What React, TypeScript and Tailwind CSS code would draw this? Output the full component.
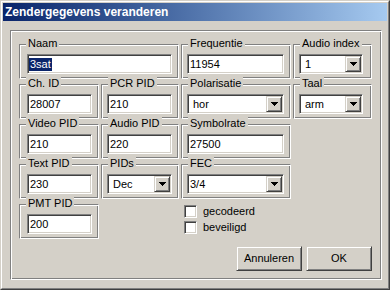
const etched =
  "border border-t-[#808080] border-l-[#808080] border-r-white border-b-white shadow-[inset_1px_1px_0_#fff,inset_-1px_-1px_0_#808080]"
const sunken =
  "border border-t-[#808080] border-l-[#808080] border-r-white border-b-white shadow-[inset_1px_1px_0_#404040,inset_-1px_-1px_0_#d4d0c8]"
const raised =
  "border border-t-[#d4d0c8] border-l-[#d4d0c8] border-r-[#404040] border-b-[#404040] shadow-[inset_1px_1px_0_#fff,inset_-1px_-1px_0_#808080]"

function Group({ label, first, className = "", children }: { label: string; first?: boolean; className?: string; children?: React.ReactNode }) {
  return (
    <div className={`relative h-[35px] pt-[9px] ${first ? "pl-[7px]" : "pl-[5px]"} ${etched} ${className}`}>
      <span className="absolute left-[6px] top-[-8px] bg-[#d4d0c8] px-[2px] leading-[13px]">{label}</span>
      {children}
    </div>
  )
}

function Edit({ value, w, selected }: { value: string; w: string; selected?: boolean }) {
  return (
    <div className={`flex h-[20px] items-center bg-white pl-[2px] leading-[13px] ${sunken} ${w}`}>
      {selected ? <span className="-ml-[1px] bg-[#0a246a] px-[1px] text-white">{value}</span> : value}
    </div>
  )
}

function Combo({ value, w, pad = "pl-[4px]" }: { value: string; w: string; pad?: string }) {
  return (
    <div className={`flex h-[20px] items-center bg-white p-[1px] leading-[13px] ${sunken} ${w}`}>
      <span className={`flex-1 ${pad}`}>{value}</span>
      <div className={`flex h-[16px] w-[16px] items-center justify-center bg-[#d4d0c8] ${raised}`}>
        <svg width="7" height="4" viewBox="0 0 7 4" shapeRendering="crispEdges">
          <path d="M0 0h7v1H0zM1 1h5v1H1zM2 2h3v1H2zM3 3h1v1H3z" fill="#000" />
        </svg>
      </div>
    </div>
  )
}

function Check({ label }: { label: string }) {
  return (
    <div className="flex items-center gap-[6px] leading-[13px]">
      <div className={`h-[13px] w-[13px] bg-white ${sunken}`} />
      <span>{label}</span>
    </div>
  )
}

function Button({ label }: { label: string }) {
  return (
    <div className={`flex h-[25px] w-[66px] items-center justify-center bg-[#d4d0c8] ${raised}`}>{label}</div>
  )
}

export default function App() {
  return (
    <div className="h-[290px] w-[390px] border border-t-[#d4d0c8] border-l-[#d4d0c8] border-r-[#404040] border-b-[#404040] bg-[#d4d0c8] font-['Liberation_Sans',Arial,sans-serif] text-[11px] text-black">
      <div className="h-full border border-t-white border-l-white border-r-[#808080] border-b-[#808080] p-[1px]">
        {/* titelbalk */}
        <div className="h-[18px] bg-gradient-to-r from-[#0a246a] to-[#a6caf0] pl-[2px] text-[12px] font-bold leading-[18px] text-white">
          Zendergegevens veranderen
        </div>

        <div className={`ml-[7px] mt-[9px] h-[250px] w-[372px] pl-[8px] pt-[13px] ${etched}`}>
          <div className="grid grid-cols-[80px_78px_110px_79px] grid-rows-[35px_35px_35px_35px_35px] gap-x-[2px] gap-y-[5px]">
            <Group label="Naam" first className="col-span-2">
              <Edit value="3sat" w="w-[145px]" selected />
            </Group>
            <Group label="Frequentie">
              <Edit value="11954" w="w-[97px]" />
            </Group>
            <Group label="Audio index">
              <Combo value="1" w="w-[64px]" />
            </Group>

            <Group label="Ch. ID" first>
              <Edit value="28007" w="w-[65px]" />
            </Group>
            <Group label="PCR PID">
              <Edit value="210" w="w-[65px]" />
            </Group>
            <Group label="Polarisatie">
              <Combo value="hor" w="w-[97px]" />
            </Group>
            <Group label="Taal">
              <Combo value="arm" w="w-[64px]" />
            </Group>

            <Group label="Video PID" first>
              <Edit value="210" w="w-[65px]" />
            </Group>
            <Group label="Audio PID">
              <Edit value="220" w="w-[65px]" />
            </Group>
            <Group label="Symbolrate">
              <Edit value="27500" w="w-[97px]" />
            </Group>
            <div />

            <Group label="Text PID" first>
              <Edit value="230" w="w-[65px]" />
            </Group>
            <Group label="PIDs">
              <Combo value="Dec" w="w-[65px]" />
            </Group>
            <Group label="FEC">
              <Combo value="3/4" w="w-[97px]" pad="pl-[1px]" />
            </Group>
            <div />

            <Group label="PMT PID" first>
              <Edit value="200" w="w-[65px]" />
            </Group>
            <div />
            <div className="col-span-2 flex flex-col gap-[3px] pl-[3px] pt-[1px]">
              <Check label="gecodeerd" />
              <Check label="beveiligd" />
            </div>
          </div>

          <div className="mt-[7px] flex w-[353px] justify-end gap-[4px]">
            <Button label="Annuleren" />
            <Button label="OK" />
          </div>
        </div>
      </div>
    </div>
  )
}
